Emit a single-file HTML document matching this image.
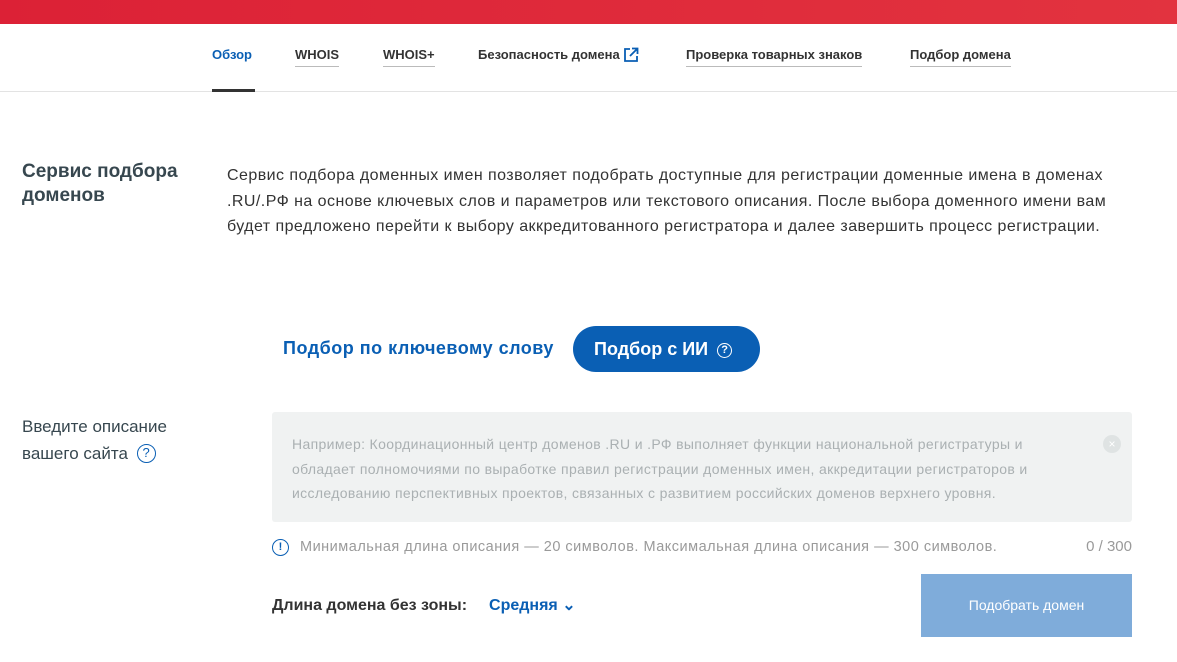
<!DOCTYPE html>
<html><head><meta charset="utf-8"><style>
*{box-sizing:border-box;margin:0;padding:0}
body{width:1177px;height:662px;overflow:hidden;background:#fff;font-family:"Liberation Sans",sans-serif;color:#333;position:relative}
.bar{position:absolute;left:0;top:0;width:1177px;height:24px;background:linear-gradient(90deg,#dc2136,#e2333f)}
.nav{position:absolute;top:24px;left:0;width:1177px;height:68px;border-bottom:1px solid #e3e3e3}
.nav a{position:absolute;top:23px;font-size:13px;font-weight:bold;color:#333;text-decoration:none;padding-bottom:4px;border-bottom:1px solid #bbb;white-space:nowrap}
.nav a.act{color:#0a5fb4;border:none}
.nav .ul{position:absolute;left:212px;top:65px;width:43px;height:3px;background:#333}
.abs{position:absolute}
h2{position:absolute;left:22px;top:160px;font-size:19px;line-height:24px;color:#37474f;font-weight:bold}
.p{left:227px;top:163px;font-size:16px;letter-spacing:0.45px;line-height:25.5px;color:#333;width:900px}
.kw{left:283px;top:338px;font-size:18px;letter-spacing:0.5px;font-weight:bold;color:#0a5fb4}
.ai{left:573px;top:326px;width:187px;height:46px;border-radius:23px;background:#0a5fb4;color:#fff;font-size:18px;font-weight:bold;line-height:46px;padding-left:21px}
.q{display:inline-block;width:15px;height:15px;border:1.5px solid currentColor;border-radius:50%;font-size:11px;line-height:12px;text-align:center;vertical-align:2px;margin-left:4px}
.lab{left:22px;top:413px;font-size:17px;line-height:27px;color:#37474f}
.ta{left:272px;top:412px;width:860px;height:110px;background:#f0f2f2;border-radius:3px;padding:20px 60px 20px 20px;font-size:14px;letter-spacing:0.35px;line-height:24.5px;color:#aab0b2}
.x{left:1103px;top:435px;width:18px;height:18px;border-radius:50%;background:#dfe3e3;color:#fff;font-size:12px;text-align:center;line-height:18px}
.hint{left:300px;top:539px;font-size:14.5px;letter-spacing:0.5px;color:#9a9a9a;white-space:nowrap}
.cnt{right:45px;top:538px;font-size:15px;color:#9a9a9a}
.ex{left:272px;top:539px;width:17px;height:17px;border:1.5px solid #0a5fb4;border-radius:50%;color:#0a5fb4;font-size:11px;font-weight:bold;text-align:center;line-height:14px}
.len{left:272px;top:595px;font-size:16px;font-weight:bold;color:#333}
.len span{color:#0a5fb4;margin-left:22px}
.btn{left:921px;top:574px;width:211px;height:63px;background:#7facda;color:#fff;font-size:14px;text-align:center;line-height:63px}
</style></head><body>
<div class="bar"></div>
<div class="nav">
<a class="act" style="left:212px">Обзор</a>
<a style="left:295px">WHOIS</a>
<a style="left:383px">WHOIS+</a>
<a style="left:478px;border:none">Безопасность домена <svg width="16" height="16" viewBox="0 0 16 16" style="vertical-align:-4px"><path d="M7 2H2v12h12V9" fill="none" stroke="#0a5fb4" stroke-width="1.8"/><path d="M9 1.5h5.5V7M14.5 1.5L7 9" fill="none" stroke="#0a5fb4" stroke-width="1.8"/></svg></a>
<a style="left:686px">Проверка товарных знаков</a>
<a style="left:910px">Подбор домена</a>
<div class="ul"></div>
</div>
<h2>Сервис подбора<br>доменов</h2>
<div class="abs p">Сервис подбора доменных имен позволяет подобрать доступные для регистрации доменные имена в доменах .RU/.РФ на основе ключевых слов и параметров или текстового описания. После выбора доменного имени вам будет предложено перейти к выбору аккредитованного регистратора и далее завершить процесс регистрации.</div>
<div class="abs kw">Подбор по ключевому слову</div>
<div class="abs ai">Подбор с ИИ <span class="q">?</span></div>
<div class="abs lab">Введите описание<br>вашего сайта <span class="q" style="color:#0a5fb4;width:19px;height:19px;font-size:13px;line-height:16px">?</span></div>
<div class="abs ta">Например: Координационный центр доменов .RU и .РФ выполняет функции национальной регистратуры и обладает полномочиями по выработке правил регистрации доменных имен, аккредитации регистраторов и исследованию перспективных проектов, связанных с развитием российских доменов верхнего уровня.</div>
<div class="abs x">×</div>
<div class="abs ex">!</div>
<div class="abs hint">Минимальная длина описания — 20 символов. Максимальная длина описания — 300 символов.</div>
<div class="abs cnt">0 / 300</div>
<div class="abs len">Длина домена без зоны:<span>Средняя ⌄</span></div>
<div class="abs btn">Подобрать домен</div>
</body></html>
